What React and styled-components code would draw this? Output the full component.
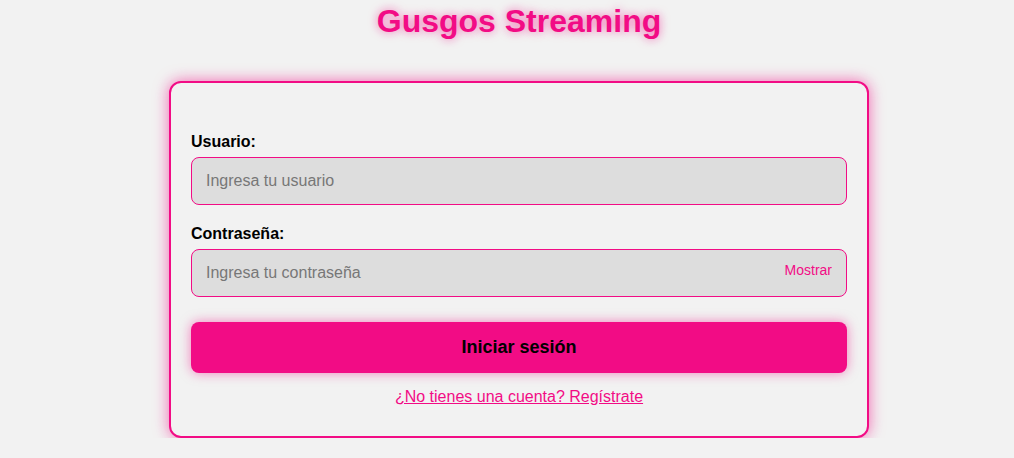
import React, { useState } from "react";
import styled, { createGlobalStyle } from "styled-components";

const pink = "#f20c85";

const GlobalStyle = createGlobalStyle`
    body {
        margin: 0;
        background: #f2f2f2;
        font-family: "Liberation Sans", Arial, sans-serif;
    }
`;

const Page = styled.div`
    display: flex;
    flex-direction: column;
    align-items: center;
    padding: 3px 0 0 24px;
`;

const Title = styled.h1`
    margin: 0 0 41px;
    font-size: 32px;
    font-weight: bold;
    color: ${pink};
    text-shadow: 0 0 10px rgba(242, 12, 133, 0.6);
`;

const Card = styled.form`
    width: 656px;
    padding: 50px 20px 30px;
    border: 2px solid ${pink};
    border-radius: 12px;
    background: #f2f2f2;
    box-shadow: 0 0 15px rgba(242, 12, 133, 0.6);
    display: flex;
    flex-direction: column;
`;

const Label = styled.label`
    font-size: 16px;
    font-weight: bold;
    color: #000;
    margin-bottom: 6px;
`;

const InputWrap = styled.div`
    position: relative;
    margin-bottom: ${(p) => p.$gap}px;
`;

const Input = styled.input`
    box-sizing: border-box;
    width: 100%;
    height: 48px;
    padding: 0 14px;
    border: 1px solid ${pink};
    border-radius: 8px;
    background: #dddddd;
    font-family: inherit;
    font-size: 16px;
    color: #333;
    outline: none;

    &::placeholder {
        color: #777;
    }
`;

const Toggle = styled.button`
    position: absolute;
    right: 15px;
    top: 13px;
    padding: 0;
    border: none;
    background: none;
    font-family: inherit;
    font-size: 14px;
    color: ${pink};
    cursor: pointer;
`;

const Submit = styled.button`
    height: 51px;
    border: none;
    border-radius: 8px;
    background: ${pink};
    color: #000;
    font-family: inherit;
    font-size: 18px;
    font-weight: bold;
    box-shadow: 0 0 12px rgba(242, 12, 133, 0.5);
    cursor: pointer;
    margin-bottom: 15px;
`;

const Register = styled.a`
    align-self: center;
    font-size: 16px;
    color: ${pink};
    text-decoration: underline;
`;

export default function App() {
    const [show, setShow] = useState(false);
    return (
        <Page>
            <GlobalStyle />
            <Title>Gusgos Streaming</Title>
            <Card onSubmit={(e) => e.preventDefault()}>
                <Label htmlFor="user">Usuario:</Label>
                <InputWrap $gap={20}>
                    <Input id="user" placeholder="Ingresa tu usuario" />
                </InputWrap>
                <Label htmlFor="pass">Contraseña:</Label>
                <InputWrap $gap={25}>
                    <Input
                        id="pass"
                        type={show ? "text" : "password"}
                        placeholder="Ingresa tu contraseña"
                    />
                    <Toggle type="button" onClick={() => setShow(!show)}>
                        {show ? "Ocultar" : "Mostrar"}
                    </Toggle>
                </InputWrap>
                <Submit type="submit">Iniciar sesión</Submit>
                <Register href="#">¿No tienes una cuenta? Regístrate</Register>
            </Card>
        </Page>
    );
}
